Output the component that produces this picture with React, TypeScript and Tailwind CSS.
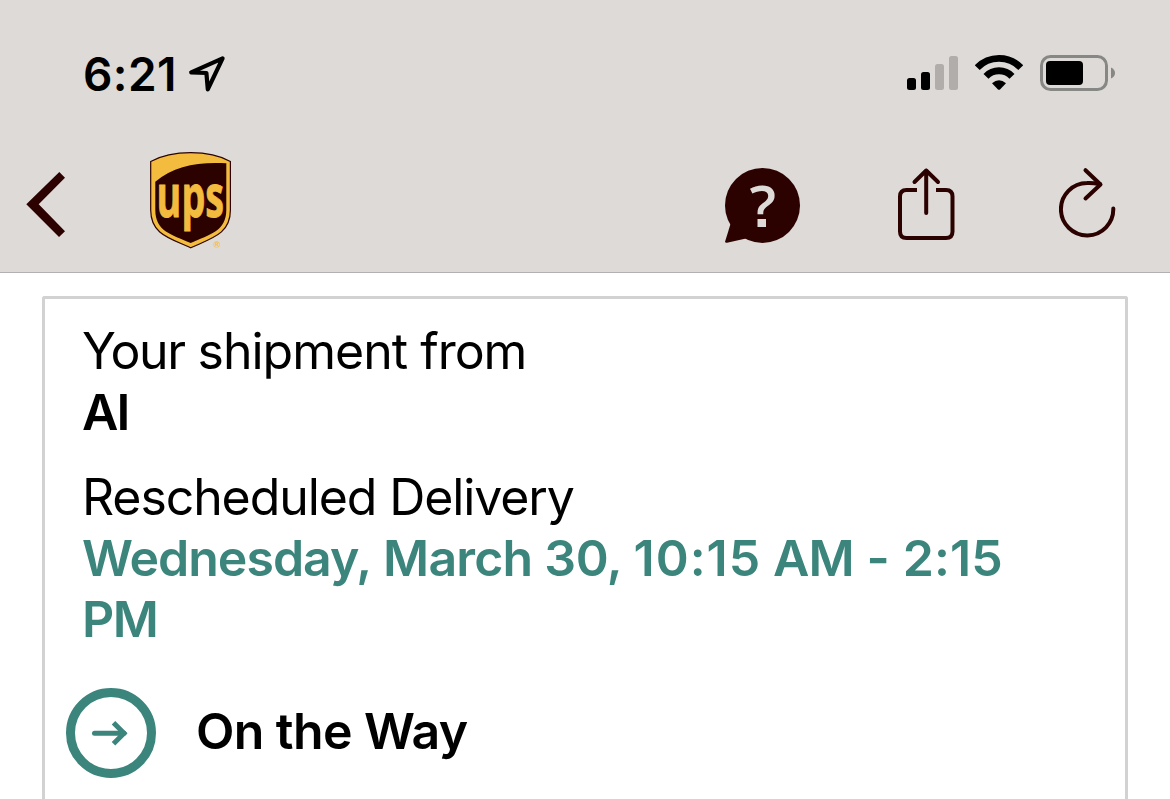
import React from "react";

const BROWN = "#2b0200";
const GOLD = "#f3bc3f";
const TEAL = "#3b857d";

function LocationArrow() {
  return (
    <svg width="38" height="40" viewBox="0 0 38 40" fill="none" stroke="#000" strokeWidth="4.2" strokeLinejoin="round">
      <path d="M34.6 4.400 3.200 18.400 18.400 19 19.800 35.400Z" />
    </svg>
  );
}

function SignalBars() {
  return (
    <svg width="52" height="44" viewBox="0 0 52 44">
      <rect x="0" y="28" width="9" height="12" rx="2.500" fill="#000" />
      <rect x="14" y="22" width="9" height="18" rx="2.500" fill="#000" />
      <rect x="28" y="14" width="9" height="26" rx="2.500" fill="#b1adab" />
      <rect x="42" y="6" width="9" height="34" rx="2.500" fill="#b1adab" />
    </svg>
  );
}

function Wifi() {
  return (
    <svg width="48" height="44" viewBox="0 -0.6 48 44" fill="none" stroke="#000">
      <path d="M2.200 17.100A30.200 30.200 0 0 1 45.800 17.100" strokeWidth="6.900" />
      <path d="M11 25.700A18 18 0 0 1 37 25.700" strokeWidth="6.900" />
      <path d="M17 32.600Q24 26.600 31 32.600L25 38.800Q24 39.700 23 38.800Z" fill="#000" stroke="none" />
    </svg>
  );
}

function Battery() {
  return (
    <svg width="76" height="44" viewBox="0 0 76 44">
      <rect x="1.500" y="6.500" width="65" height="33" rx="9" fill="none" stroke="#878785" strokeWidth="3" />
      <rect x="6" y="11" width="37" height="24" rx="4" fill="#000" />
      <path d="M71 17.500Q75 19.500 75 23T71 28.500Z" fill="#878785" />
    </svg>
  );
}

function UpsLogo() {
  return (
    <svg width="82" height="100" viewBox="0 0 82 100">
      <path
        d="M.7 11.500Q17 2.700 40.700 2.700T80.400 11.500V60C80.400 84 62 88 40.700 97.800 19 88 .7 84 .7 60Z"
        fill={GOLD}
        stroke={BROWN}
        strokeWidth="1.2"
      />
      <path d="M5.300 31.700C24 16 48 11.600 76.300 13.300V60C76.300 81 60 84.500 40.700 93 21 84.500 5.300 81 5.300 60Z" fill={BROWN} />
      <text
        transform="translate(6.6 67) scale(.635 1)"
        fontFamily="'Open Sans', sans-serif"
        fontWeight="700"
        fontSize="59.5"
        fill={GOLD}
        stroke={GOLD}
        strokeWidth=".9"
      >
        ups
      </text>
      <text x="63.500" y="97.500" fontFamily="'Liberation Sans', sans-serif" fontSize="9" fontWeight="700" fill={GOLD}>
        ®
      </text>
    </svg>
  );
}

function HelpBubble() {
  return (
    <svg width="76" height="100" viewBox="0 0 76 100">
      <circle cx="37.500" cy="55.400" r="37.500" fill={BROWN} />
      <path d="M5.500 74 .2 91.200Q0 93.200 2 92.800L21 88.400Z" fill={BROWN} />
      <text
        x="37.800"
        y="77"
        textAnchor="middle"
        fontFamily="'Open Sans', sans-serif"
        fontWeight="600"
        fontSize="58.5"
        fill="#dedad7"
      >
        ?
      </text>
      {/* square dot */}
      <rect x="29" y="66.500" width="16" height="12" fill={BROWN} />
      <rect x="32.500" y="69" width="8.500" height="8" fill="#dedad7" />
    </svg>
  );
}

function ShareIcon() {
  return (
    <svg width="58" height="100" viewBox="0 0 58 100" fill="none" stroke={BROWN} strokeWidth="4">
      <path d="M19 40H8.500Q2 40 2 46.500V81.500Q2 88 8.500 88H48Q54.500 88 54.500 81.500V46.500Q54.500 40 48 40H38" />
      <path d="M28.200 63V20.500M16.500 32 28.200 20.500 40 32" strokeLinecap="round" strokeLinejoin="round" />
    </svg>
  );
}

function RefreshIcon() {
  return (
    <svg
      width="58"
      height="100"
      viewBox="0 0 58 100"
      fill="none"
      stroke={BROWN}
      strokeWidth="4"
      strokeLinecap="round"
      strokeLinejoin="round"
    >
      <path d="M54.300 58.500A26.200 26.200 0 1 1 28 33Q33 32.500 41 34.300" />
      <path d="M26.500 20.200 41.500 34.500 26.500 48.500" />
    </svg>
  );
}

export default function App() {
  return (
    <div className="flex h-[799px] w-[1170px] flex-col overflow-hidden bg-white font-['Inter',sans-serif] text-black">
      <header className="h-[273px] shrink-0 border-b border-[#b3b0b1] bg-[#dedad7]">
        {/* Status bar */}
        <div className="flex h-[150px] items-start justify-between pt-[50px] pr-[54px] pl-[83px]">
          <div className="flex h-12 items-center">
            <span className="w-[105px] text-[46px] leading-[48px] font-semibold tracking-[0.4px]">6:21</span>
            <LocationArrow />
          </div>
          <div className="flex">
            <SignalBars />
            <div className="ml-4">
              <Wifi />
            </div>
            <div className="ml-[17px]">
              <Battery />
            </div>
          </div>
        </div>

        {/* Navigation */}
        <nav className="flex h-[100px] items-center justify-between pr-[53px] pl-[26px]">
          <div className="flex gap-[84px]">
            <button aria-label="Back">
              <svg width="40" height="100" viewBox="0 0 40 100">
                <path d="M.3 54.300 33.300 22 39 27.700 12.700 54.300 39 81.300 33 87Z" fill={BROWN} />
              </svg>
            </button>
            <UpsLogo />
          </div>
          <div className="flex">
            <button aria-label="Help">
              <HelpBubble />
            </button>
            <button aria-label="Share" className="ml-[97px]">
              <ShareIcon />
            </button>
            <button aria-label="Refresh" className="ml-[103px]">
              <RefreshIcon />
            </button>
          </div>
        </nav>
      </header>

      {/* Shipment card */}
      <main className="mx-[42px] mt-[23px] flex-1 rounded-t-[3px] border-3 border-b-0 border-[#d2d2d2] pt-[22px] pl-[37px] text-[50px] leading-[61px]">
        <p className="tracking-[-1px]">
          <span className="tracking-[-1.5px]">Your</span> shipment from
        </p>
        <p className="font-semibold tracking-[-2px]">AI</p>
        <p className="mt-6 tracking-[-1.1px]">Rescheduled Delivery</p>
        <p className="w-[960px] font-semibold tracking-[-0.8px] text-[#3b857d]">
          <span className="tracking-[-1px]">Wednesday,</span> March <span className="tracking-[-0.4px]">30, </span>
          <span className="tracking-[1px]">10:15</span> <span className="tracking-[-0.8px]">AM</span>
          <span className="tracking-[0.1px]"> - 2:15</span> <span className="tracking-[-1.5px]">PM</span>
        </p>
        <div className="mt-[38px] -ml-4 flex items-center gap-10">
          <svg width="90" height="90" viewBox="0 0 90 90" fill="none" stroke={TEAL}>
            <circle cx="45" cy="45" r="40.500" strokeWidth="9" />
            <path d="M28.500 45.300H58" strokeWidth="5" strokeLinecap="round" />
            <path d="M47.500 34.800 58 45.300 47.500 55.800" strokeWidth="5" />
          </svg>
          <span className="-mt-1 font-semibold tracking-[-0.6px]">On the Way</span>
        </div>
      </main>
    </div>
  );
}
